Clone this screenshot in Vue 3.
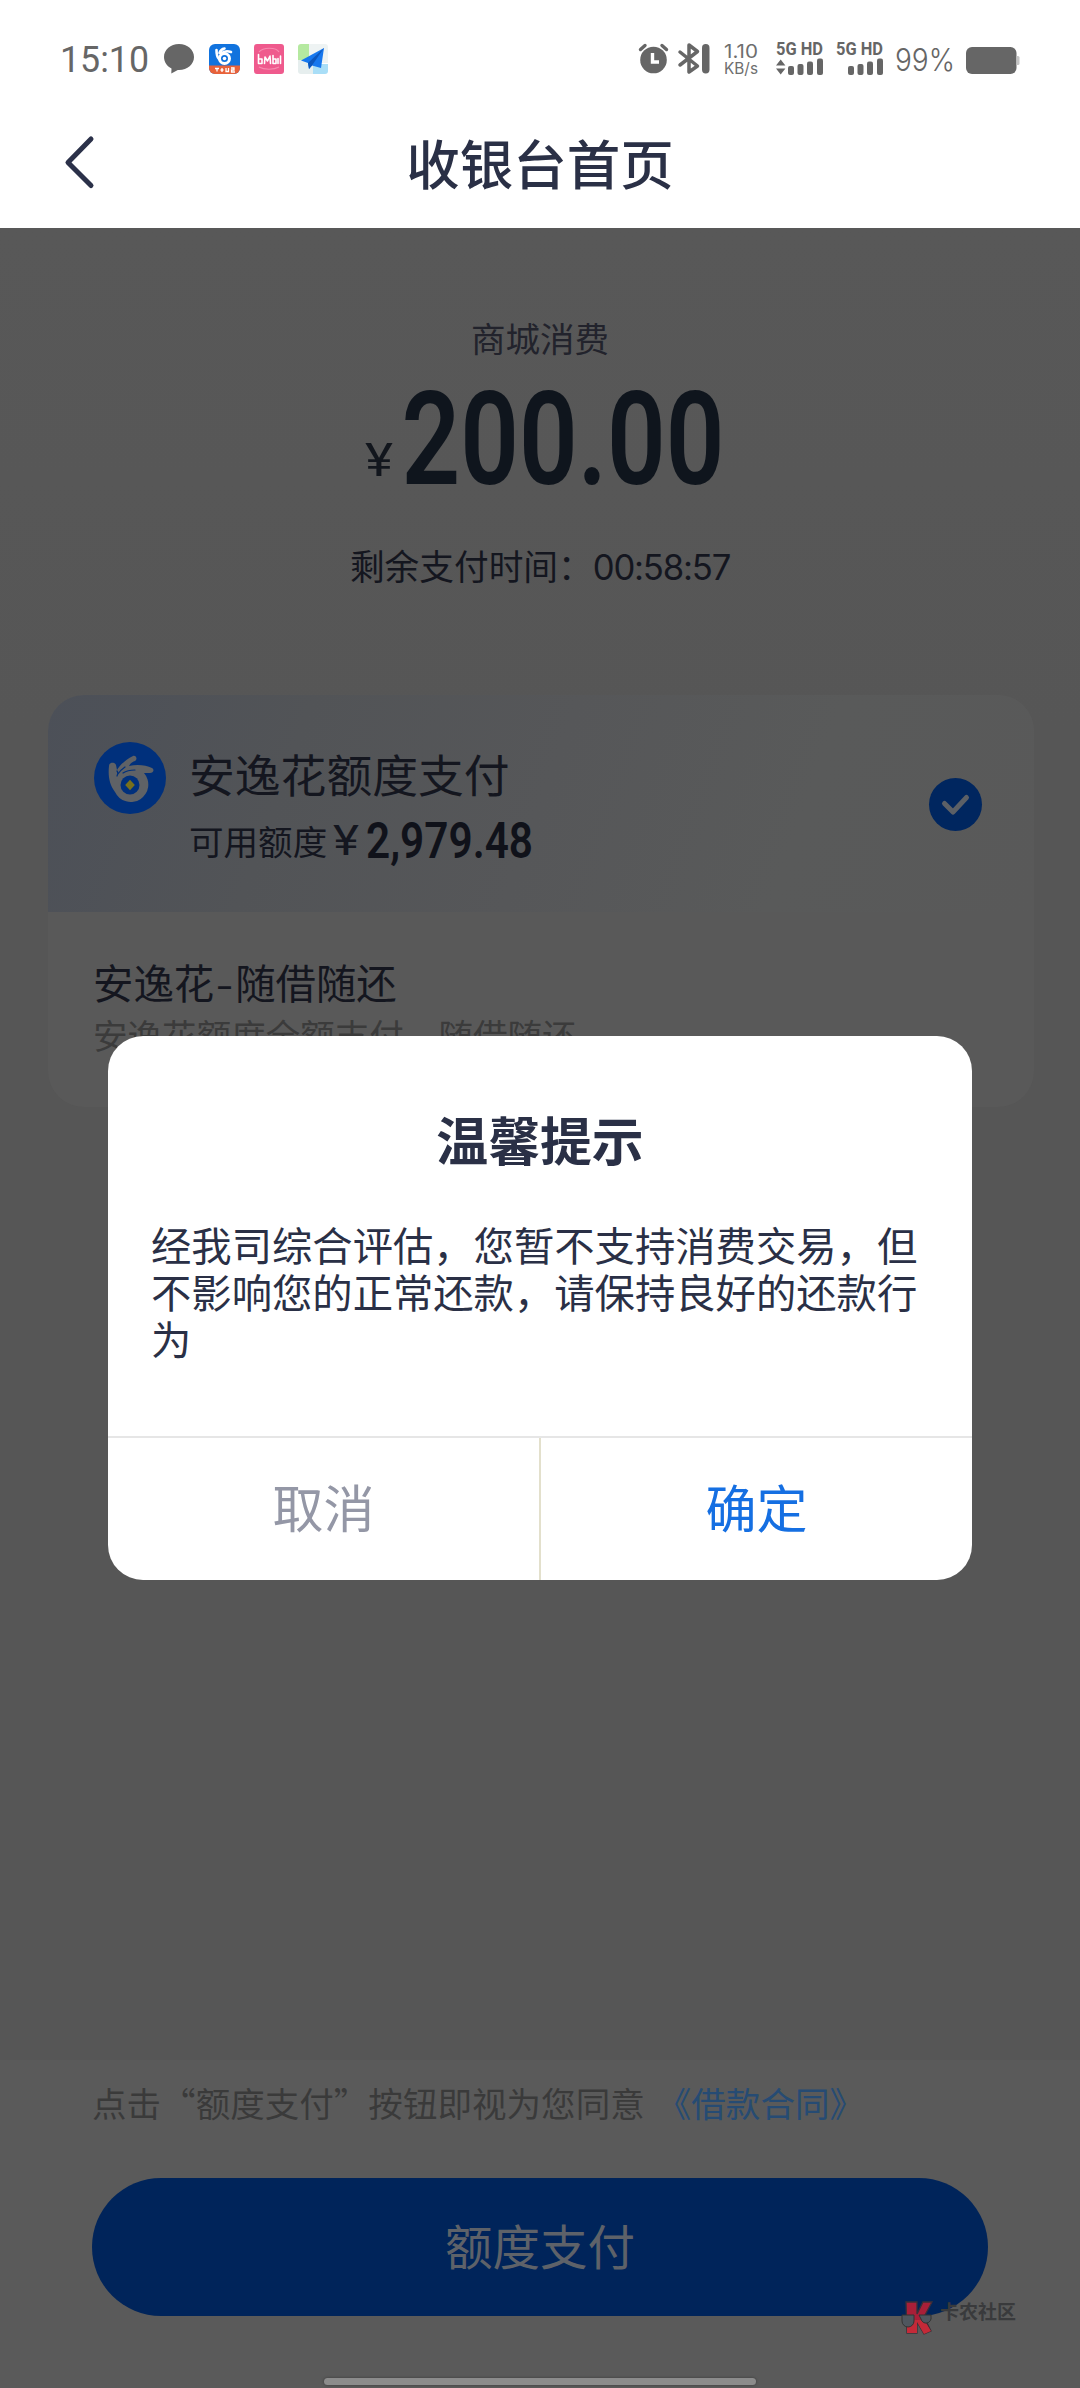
<script setup>
const clock = '15:10'
const signals = [
  { label: '5G HD', arrows: true },
  { label: '5G HD', arrows: false },
]
const bars = [
  { x: 12, y: 20, h: 9 },
  { x: 21.5, y: 18, h: 11 },
  { x: 31, y: 15.5, h: 13.5 },
  { x: 41, y: 12.5, h: 16.5 },
]
</script>

<template>
  <div class="screen">
    <header class="top">
      <div class="status">
        <div class="status-left">
          <svg class="clock" width="92" height="50" viewBox="0 -8 92 50">
            <text x="0" y="31.5" textLength="89" lengthAdjust="spacingAndGlyphs">{{ clock }}</text>
          </svg>
          <svg class="bubble" width="30" height="30" viewBox="0 0 30 30">
            <path d="M15 0C6.500 0 0 5.700 0 13c0 5 3 9.200 7.500 11.400L7.300 29.500l6.500-3.600H15c8.500 0 15-5.600 15-12.900S23.500 0 15 0z" fill="#666" />
          </svg>
          <svg class="app" width="31" height="30" viewBox="0 0 31 30">
            <defs>
              <clipPath id="app-clip"><rect width="31" height="30" rx="6" /></clipPath>
            </defs>
            <g clip-path="url(#app-clip)">
              <rect width="31" height="30" fill="#1173de" />
              <rect y="21.500" width="31" height="9" fill="#e8623a" />
              <path d="M7.500 6c0 4 0 7 2.500 9M10.500 9c1-3 2-4 5-4.500M12 9.500c3-2.500 6-3 10-1.500" stroke="#fff" stroke-width="2.600" fill="none" stroke-linecap="round" />
              <circle cx="15.500" cy="14.500" r="5" fill="#1173de" stroke="#fff" stroke-width="3" />
              <circle cx="15.500" cy="14.500" r="1.800" fill="#fff" />
              <path d="M6 24.500h4M8 24v3.500M13 24v4M11.500 26h3M17 24v3.500h2.500V24M22 24h3v2h-2.500v2H26" stroke="#fff" stroke-width="1.300" fill="none" />
            </g>
          </svg>
          <svg class="app" width="30" height="30" viewBox="0 0 30 30">
            <rect width="30" height="30" rx="3" fill="#ef5a8d" />
            <path d="M5 8C9 3 22 3 25 8M5 23c5 3 15 3 20 0" stroke="#f78bb0" stroke-width="1.200" fill="none" />
            <path d="M4.500 10.500v9h3.500v-4.500h-3.500M10.500 19.500l.5-6.500 2.500 4 2.500-5 .5 7.500M19 11.500v8h3v-4.500h-3M24 19.500v-5M26.500 12v7.500" stroke="#fff" stroke-width="1.600" fill="none" stroke-linejoin="round" stroke-linecap="round" />
          </svg>
          <svg class="app" width="31" height="30" viewBox="0 0 31 30">
            <path d="M3 0h8v16H0V3a3 3 0 0 1 3-3z" fill="#b5e9a0" />
            <path d="M11 0h16a3 3 0 0 1 3 3v16H11z" fill="#eef3f3" />
            <path d="M0 16h15v14H3a3 3 0 0 1-3-3z" fill="#e6eeee" />
            <path d="M15 20h15v7a3 3 0 0 1-3 3H15z" fill="#a9def7" />
            <path d="M26 4 3 16.500 10 19l1 6 3-3.500 9 2.500z" fill="#1677ee" />
            <path d="M26 4 10 19l1 6 3-3.500z" fill="#0b56bd" />
          </svg>
        </div>
        <div class="status-right">
          <svg width="29" height="31" viewBox="0 0 29 31" class="alarm">
            <circle cx="14.500" cy="17" r="13.300" fill="#666" />
            <path d="M1.500 6.500 6 2.500M27.500 6.500 23 2.500" stroke="#666" stroke-width="3.400" stroke-linecap="round" />
            <path d="M13.500 10v9h6.500" stroke="#fff" stroke-width="3.400" fill="none" />
          </svg>
          <svg width="32" height="31" viewBox="0 0 32 31" class="bt">
            <path d="M2 9 19.500 23 11 29V2l8.500 6.500L2 22" stroke="#666" stroke-width="3.500" fill="none" stroke-linejoin="round" stroke-linecap="round" />
            <rect x="24" y="1" width="7.500" height="29.500" rx="3.700" fill="#666" />
          </svg>
          <svg width="36" height="48" viewBox="0 -10 36 48" class="speed">
            <text x="0" y="14.500" font-size="18.500" textLength="34" lengthAdjust="spacingAndGlyphs">1.10</text>
            <text x="0" y="30.500" font-size="16" textLength="34" lengthAdjust="spacingAndGlyphs">KB/s</text>
          </svg>
          <svg v-for="(s, i) in signals" :key="i" class="signal" width="50" height="44" viewBox="0 -10 50 44">
            <text x="0" y="12" textLength="47" lengthAdjust="spacingAndGlyphs">{{ s.label }}</text>
            <g transform="translate(0 3)">
              <path v-if="s.arrows" d="M0 19.500 4.700 13.500l4.700 6zM0 22.500l4.700 6 4.700-6z" fill="#666" />
              <rect v-for="b in bars" :key="b.x" :x="b.x" :y="b.y" width="6" :height="b.h" rx="2" fill="#666" />
            </g>
          </svg>
          <svg class="percent" width="70" height="56" viewBox="-4 -14 70 56">
            <text x="0" y="28" textLength="60" lengthAdjust="spacingAndGlyphs">99%</text>
          </svg>
          <svg width="54" height="27" viewBox="0 0 54 27" class="battery">
            <rect width="50.500" height="27" rx="6" fill="#666" />
            <path d="M50.500 9h1.500a1.500 1.500 0 0 1 1.500 1.500v6a1.500 1.500 0 0 1-1.500 1.500h-1.500z" fill="#c4c4c4" />
          </svg>
        </div>
      </div>
      <nav class="nav">
        <svg class="back" width="32" height="54" viewBox="0 0 32 54">
          <path d="M28 4 5 27.500l23 23" stroke="#2b3149" stroke-width="5" fill="none" stroke-linecap="round" stroke-linejoin="round" />
        </svg>
        <h1>收银台首页</h1>
      </nav>
    </header>

    <main class="content">
      <section class="amount">
        <p class="scene">商城消费</p>
        <div class="price">
          <svg width="410" height="190" viewBox="-25 -45 410 190">
            <text x="5" y="91" class="yen" textLength="28" lengthAdjust="spacingAndGlyphs">¥</text>
            <text x="41.5" y="98.5" class="num" textLength="323" lengthAdjust="spacingAndGlyphs">200.00</text>
          </svg>
        </div>
        <p class="remain">剩余支付时间：<span>00:58:57</span></p>
      </section>

      <section class="card">
        <div class="card-head">
          <svg class="logo" width="72" height="72" viewBox="0 0 72 72">
            <circle cx="36" cy="36" r="36" fill="#00307c" />
            <path d="M15 24c0-4 6-4 7-1l1 5c2-4 8-10 16-14 3-1 5 3 2 5-3 1-5 3-6 5 8-2 17-1 23 2 3 2 1 5-2 5l-6 0a17.500 17.500 0 1 1-29 19C15 42 14 33 15 24z" fill="#5f6266" />
            <path d="M23 29c1 1 1 3 0 5M31 25c-3 2-5 4-7 7M41 28c-5 0-9 1-12 3" stroke="#00307c" stroke-width="1.200" fill="none" stroke-linecap="round" />
            <circle cx="36" cy="43" r="9.500" fill="#00307c" />
            <path d="M36 37.800 40.800 43l-4.800 5.200-4.800-5.200z" fill="#77701c" />
          </svg>
          <div class="method">
            <p class="method-name">安逸花额度支付</p>
            <p class="quota">
              <span>可用额度</span>
              <svg width="220" height="84" viewBox="-6 -22 220 84">
                <text x="0" y="35" class="quota-yen" textLength="26" lengthAdjust="spacingAndGlyphs">¥</text>
                <text x="33" y="38" class="quota-num" textLength="167" lengthAdjust="spacingAndGlyphs">2,979.48</text>
              </svg>
            </p>
          </div>
          <svg class="check" width="53" height="53" viewBox="0 0 53 53">
            <circle cx="26.500" cy="26.500" r="26.500" fill="#00265f" />
            <path d="M15.500 25.500 24 34l13.500-14.500" stroke="#5c6066" stroke-width="5" fill="none" stroke-linecap="round" stroke-linejoin="round" />
          </svg>
        </div>
        <div class="card-body">
          <p class="plan">安逸花<span class="dash">-</span>随借随还</p>
          <p class="plan-desc">安逸花额度全额支付，随借随还</p>
        </div>
      </section>
    </main>

    <footer class="bottom">
      <p class="agree">点击“额度支付”按钮即视为您同意<a>《借款合同》</a></p>
      <button class="pay">额度支付</button>
      <div class="home-bar"></div>
    </footer>

    <div class="watermark">
      <svg width="34" height="36" viewBox="0 0 34 36">
        <path d="M6 2h11v12l6-12h9l-8 15 7 14-7 3-7-12v11H7z" fill="#a81f38" stroke="#3b3038" stroke-width="1.300" />
        <path d="M7 20h10l7 0 7 11-7 3-7-12v11H7z" fill="#c42a38" />
        <path d="M2 15h12v6a6 6 0 0 1-12 0zM19 15h12v2a5 5 0 0 1-10 2z" fill="#4f565e" stroke="#333" stroke-width="1" />
      </svg>
      <span>卡农社区</span>
    </div>

    <div class="dialog" role="dialog">
      <h2>温馨提示</h2>
      <p class="message">经我司综合评估，您暂不支持消费交易，但不影响您的正常还款，请保持良好的还款行为</p>
      <div class="actions">
        <button class="cancel">取消</button>
        <button class="confirm">确定</button>
      </div>
    </div>
  </div>
</template>

<style>
body {
  margin: 0;
}
</style>

<style scoped>
.screen {
  position: relative;
  display: flex;
  flex-direction: column;
  width: 1080px;
  height: 2388px;
  overflow: hidden;
  background: #565656;
  font-family: "Noto Sans CJK SC", "Noto Sans", sans-serif;
  font-weight: 400;
  color: #14161f;
}
p, h1, h2 {
  margin: 0;
  font-weight: 400;
}
svg {
  display: block;
  flex: none;
  overflow: visible;
}
button {
  border: 0;
  padding: 0;
  background: none;
  font: inherit;
}
.top {
  height: 228px;
  flex: none;
  background: #fff;
}
.status {
  display: flex;
  justify-content: space-between;
  height: 104px;
  padding: 0 60px;
}
.status-left,
.status-right {
  display: flex;
  align-items: flex-start;
}
.clock {
  margin: 32px 12px 0 0;
  font: 400 37px Roboto, sans-serif;
  fill: #666;
}
.bubble {
  margin: 44px 15px 0 0;
}
.app {
  margin: 44px 14px 0 0;
}
.alarm {
  margin: 43px 10px 0 0;
}
.bt {
  margin: 43px 14px 0 0;
}
.speed {
  margin: 33px 16px 0 0;
  font-family: Inter, sans-serif;
  fill: #6e6e6e;
}
.signal {
  margin: 33px 10px 0 0;
  font: 700 17.5px Roboto, sans-serif;
  fill: #666;
}
.percent {
  margin: 29px 5px 0 -5px;
  font: 300 31px Inter, sans-serif;
  fill: #666;
}
.battery {
  margin-top: 47px;
}
.nav {
  display: grid;
  grid-template-columns: 108px 1fr 108px;
  align-items: center;
  height: 116px;
}
.back {
  margin-left: 63px;
}
.nav h1 {
  font-size: 53.5px;
  line-height: 60px;
  font-weight: 500;
  text-align: center;
  color: #2a3046;
}
.content {
  display: flex;
  flex-direction: column;
  height: 1832px;
  flex: none;
  background: linear-gradient(#585858, #565656 500px);
}
.amount {
  display: flex;
  flex-direction: column;
  align-items: center;
  height: 467px;
}
.scene {
  margin-top: 84px;
  font-size: 34.56px;
  line-height: 50px;
  color: #22232c;
}
.price {
  height: 190px;
  margin: -22px 0 -20px;
}
.yen {
  font: 400 46px Roboto, sans-serif;
  fill: #12161d;
}
.num {
  font: 600 129px Roboto, sans-serif;
  fill: #0f151d;
}
.remain {
  margin-top: 27px;
  font-size: 34.7px;
  line-height: 56px;
  white-space: nowrap;
}
.remain span {
  font-family: Inter, sans-serif;
  letter-spacing: -1.2px;
}
.card {
  width: 986px;
  height: 412px;
  margin-left: 48px;
  border-radius: 36px;
  background: #595959;
  overflow: hidden;
}
.card-head {
  display: flex;
  height: 217px;
  background: linear-gradient(110deg, #4c5058 0%, #525457 25%, #565759 50%, #595a5a 75%, #595959 100%);
}
.logo {
  margin: 47px 0 0 46px;
}
.method {
  flex: 1;
  padding: 48px 0 0 23px;
}
.method-name {
  font-size: 45.8px;
  line-height: 60px;
}
.quota {
  display: flex;
  margin-top: 12px;
  font-size: 34.56px;
  line-height: 50px;
}
.quota-yen {
  font: 400 42px Roboto, sans-serif;
  fill: #14161f;
}
.quota-num {
  font: 600 50px Roboto, sans-serif;
  fill: #10121a;
}
.quota svg {
  margin: -17px 0 0 0;
}
.check {
  margin: 83px 52px 0 0;
}
.card-body {
  padding: 40px 45px;
}
.plan {
  font-size: 40.4px;
  line-height: 60px;
}
.dash {
  display: inline-block;
  width: 21px;
  transform: scaleX(1.25);
  text-align: center;
}
.plan-desc {
  font-size: 34.56px;
  line-height: 44px;
  color: #3b3b3b;
}
.bottom {
  display: flex;
  flex-direction: column;
  height: 328px;
  background: #5a5a5a;
}
.agree {
  margin: 17px 0 0 92px;
  font-size: 34.56px;
  line-height: 50px;
  color: #3a3a3a;
  white-space: nowrap;
}
.agree a {
  margin-left: 12px;
  color: #264b73;
}
.pay {
  width: 896px;
  height: 138px;
  margin: 51px 0 0 92px;
  border-radius: 69px;
  background: #00245a;
  color: #5e6269;
  font-size: 47.5px;
  line-height: 131px;
  padding-bottom: 5px;
}
.home-bar {
  width: 432px;
  height: 7px;
  margin: 62px auto 0;
  border-radius: 4px;
  background: #8c8c8c;
  box-shadow: 0 0 2px 1px #4b4b4b;
}
.watermark {
  position: absolute;
  left: 900px;
  top: 2300px;
  display: flex;
  gap: 6px;
  color: #393a3c;
  font-size: 19px;
  line-height: 22px;
  font-weight: 700;
}
.dialog {
  position: absolute;
  left: 108px;
  top: 1036px;
  display: flex;
  flex-direction: column;
  width: 864px;
  height: 544px;
  border-radius: 35px;
  background: #fff;
  overflow: hidden;
  color: #2a3046;
}
.dialog h2 {
  margin-top: 68px;
  font-size: 51.84px;
  line-height: 70px;
  font-weight: 700;
  text-align: center;
}
.message {
  flex: 1;
  margin: 45.5px 44px 0 43px;
  font-size: 40.35px;
  line-height: 47px;
  width: 772px;
}
.actions {
  display: flex;
  height: 142px;
  border-top: 2px solid #e6e6e6;
}
.actions button {
  flex: 1;
  font-size: 51px;
  line-height: 134px;
  padding-bottom: 7px;
}
.cancel {
  color: #9497a6;
  border-right: 2px solid #e3e0cc;
}
.confirm {
  color: #156fe2;
}
</style>
